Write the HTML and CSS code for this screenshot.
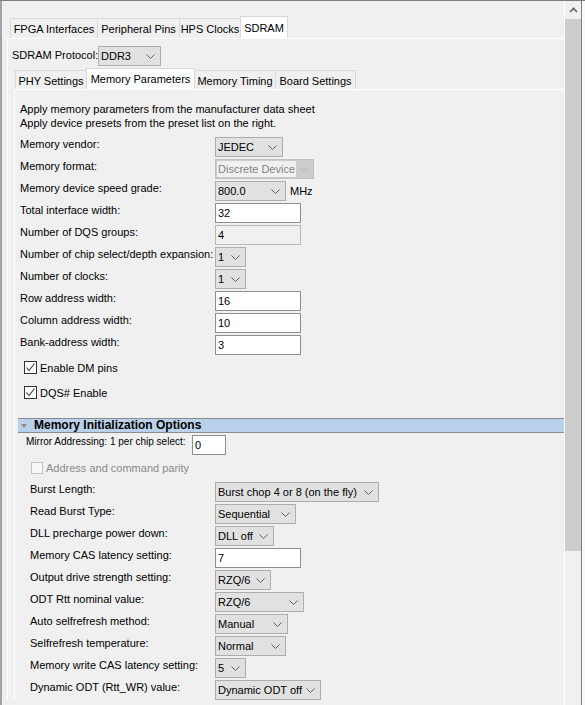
FILE: index.html
```html
<!DOCTYPE html>
<html>
<head>
<meta charset="utf-8">
<link rel="stylesheet" href="styles.css">
</head>
<body>
<div class="window">
  <div class="pane">
    <div class="tabs outer-tabs">
      <div class="tab w88">FPGA Interfaces</div>
      <div class="tab w83">Peripheral Pins</div>
      <div class="tab w62">HPS Clocks</div>
      <div class="tab active w48">SDRAM</div>
    </div>
    <div class="panel outer-panel">
      <div class="protocol-row">
        <span class="protocol-label">SDRAM Protocol:</span>
        <div class="select w63"><span class="val">DDR3</span><svg class="chev" width="9" height="5" viewBox="0 0 9 5"><polyline points="0.5,0.5 4.5,4.5 8.5,0.5"/></svg></div>
      </div>
      <div class="inner-wrap">
        <div class="tabs inner-tabs">
          <div class="tab w72">PHY Settings</div>
          <div class="tab active w109">Memory Parameters</div>
          <div class="tab w82">Memory Timing</div>
          <div class="tab w81">Board Settings</div>
        </div>
        <div class="panel inner-panel">
          <p class="intro">Apply memory parameters from the manufacturer data sheet<br>Apply device presets from the preset list on the right.</p>
          <div class="form form1">
            <span class="lbl">Memory vendor:</span>
            <div class="select w68"><span class="val">JEDEC</span><svg class="chev" width="9" height="5" viewBox="0 0 9 5"><polyline points="0.5,0.5 4.5,4.5 8.5,0.5"/></svg></div>

            <span class="lbl">Memory format:</span>
            <div class="select disabled w99"><span class="val">Discrete Device</span><svg class="chev" width="9" height="5" viewBox="0 0 9 5"><polyline points="0.5,0.5 4.5,4.5 8.5,0.5"/></svg></div>

            <span class="lbl">Memory device speed grade:</span>
            <div class="field-unit"><div class="select w71"><span class="val">800.0</span><svg class="chev" width="9" height="5" viewBox="0 0 9 5"><polyline points="0.5,0.5 4.5,4.5 8.5,0.5"/></svg></div><span class="unit">MHz</span></div>

            <span class="lbl">Total interface width:</span>
            <div class="input w86">32</div>

            <span class="lbl">Number of DQS groups:</span>
            <div class="input readonly w86">4</div>

            <span class="lbl">Number of chip select/depth expansion:</span>
            <div class="select w31"><span class="val">1</span><svg class="chev" width="9" height="5" viewBox="0 0 9 5"><polyline points="0.5,0.5 4.5,4.5 8.5,0.5"/></svg></div>

            <span class="lbl">Number of clocks:</span>
            <div class="select w31"><span class="val">1</span><svg class="chev" width="9" height="5" viewBox="0 0 9 5"><polyline points="0.5,0.5 4.5,4.5 8.5,0.5"/></svg></div>

            <span class="lbl">Row address width:</span>
            <div class="input w86">16</div>

            <span class="lbl">Column address width:</span>
            <div class="input w86">10</div>

            <span class="lbl">Bank-address width:</span>
            <div class="input w86">3</div>
          </div>

          <div class="checks">
            <label class="check"><span class="box"><svg width="11" height="11" viewBox="0 0 11 11"><polyline points="1.5,5.5 4,8.5 9.5,1.5"/></svg></span>Enable DM pins</label>
            <label class="check"><span class="box"><svg width="11" height="11" viewBox="0 0 11 11"><polyline points="1.5,5.5 4,8.5 9.5,1.5"/></svg></span>DQS# Enable</label>
          </div>

          <div class="section-header"><span class="tri"></span>Memory Initialization Options</div>

          <div class="mirror-row">
            <span class="lbl mirror-lbl">Mirror Addressing: 1 per chip select:</span>
            <div class="input w34">0</div>
          </div>

          <label class="check disabled parity"><span class="box"></span>Address and command parity</label>

          <div class="form form2">
            <span class="lbl">Burst Length:</span>
            <div class="select w164"><span class="val">Burst chop 4 or 8 (on the fly)</span><svg class="chev" width="9" height="5" viewBox="0 0 9 5"><polyline points="0.5,0.5 4.5,4.5 8.5,0.5"/></svg></div>

            <span class="lbl">Read Burst Type:</span>
            <div class="select w81"><span class="val">Sequential</span><svg class="chev" width="9" height="5" viewBox="0 0 9 5"><polyline points="0.5,0.5 4.5,4.5 8.5,0.5"/></svg></div>

            <span class="lbl">DLL precharge power down:</span>
            <div class="select w59"><span class="val">DLL off</span><svg class="chev" width="9" height="5" viewBox="0 0 9 5"><polyline points="0.5,0.5 4.5,4.5 8.5,0.5"/></svg></div>

            <span class="lbl">Memory CAS latency setting:</span>
            <div class="input w86">7</div>

            <span class="lbl">Output drive strength setting:</span>
            <div class="select w56"><span class="val">RZQ/6</span><svg class="chev" width="9" height="5" viewBox="0 0 9 5"><polyline points="0.5,0.5 4.5,4.5 8.5,0.5"/></svg></div>

            <span class="lbl">ODT Rtt nominal value:</span>
            <div class="select w89"><span class="val">RZQ/6</span><svg class="chev" width="9" height="5" viewBox="0 0 9 5"><polyline points="0.5,0.5 4.5,4.5 8.5,0.5"/></svg></div>

            <span class="lbl">Auto selfrefresh method:</span>
            <div class="select w73"><span class="val">Manual</span><svg class="chev" width="9" height="5" viewBox="0 0 9 5"><polyline points="0.5,0.5 4.5,4.5 8.5,0.5"/></svg></div>

            <span class="lbl">Selfrefresh temperature:</span>
            <div class="select w71"><span class="val">Normal</span><svg class="chev" width="9" height="5" viewBox="0 0 9 5"><polyline points="0.5,0.5 4.5,4.5 8.5,0.5"/></svg></div>

            <span class="lbl">Memory write CAS latency setting:</span>
            <div class="select w31"><span class="val">5</span><svg class="chev" width="9" height="5" viewBox="0 0 9 5"><polyline points="0.5,0.5 4.5,4.5 8.5,0.5"/></svg></div>

            <span class="lbl">Dynamic ODT (Rtt_WR) value:</span>
            <div class="select w106"><span class="val">Dynamic ODT off</span><svg class="chev" width="9" height="5" viewBox="0 0 9 5"><polyline points="0.5,0.5 4.5,4.5 8.5,0.5"/></svg></div>
          </div>
        </div>
      </div>
    </div>
  </div>
  <div class="scrollbar">
    <div class="sb-arrow"><svg width="9" height="6" viewBox="0 0 9 6"><polyline points="1,5 4.5,1.5 8,5"/></svg></div>
    <div class="sb-thumb"></div>
  </div>
  <div class="edge"></div>
</div>
</body>
</html>
```
FILE: styles.css
```css
* { box-sizing: border-box; }
html, body { margin: 0; padding: 0; }
body {
  width: 585px;
  height: 705px;
  overflow: hidden;
  background: #f0f0f0;
  font-family: "Liberation Sans", Arial, sans-serif;
  font-size: 11px;
  line-height: 14px;
  color: #000;
}
.window {
  display: flex;
  height: 705px;
  border-top: 1px solid #7d7d7d;
}
.pane {
  width: 564px;
  height: 704px;
  overflow: hidden;
  border-left: 2px solid #a3a3a3;
}

/* tabs */
.tabs { display: flex; align-items: flex-start; }
.outer-tabs { height: 22px; margin-top: 15px; padding-left: 8px; }
.inner-tabs { height: 21px; padding-left: 1px; }
.tab {
  height: 20px;
  margin-top: 2px;
  margin-right: -1px;
  border: 1px solid #d9d9d9;
  border-bottom: none;
  background: #f0f0f0;
  display: flex;
  align-items: center;
  justify-content: center;
  white-space: nowrap;
  padding-top: 1px;
}
.inner-tabs .tab { height: 19px; }
.tab.active {
  height: 22px;
  margin-top: 0;
  background: #fff;
  position: relative;
  z-index: 1;
  padding-top: 0;
}
.inner-tabs .tab.active { height: 21px; }
.w88 { width: 88px; }
.w83 { width: 83px; }
.w62 { width: 62px; }
.w48 { width: 48px; }
.w72 { width: 72px; }
.w109 { width: 109px; }
.w82 { width: 82px; }
.w81 { width: 81px; }

/* panels */
.panel { border-top: 1px solid #fff; border-left: 1px solid #fff; }
.outer-panel { margin-left: 5px; padding: 7px 0 0 4px; }
.protocol-row { display: flex; align-items: center; height: 20px; }
.protocol-label { width: 86px; white-space: nowrap; padding-bottom: 2px; }
.inner-wrap { margin-top: 2px; margin-left: 2px; }
.inner-panel { padding: 12px 0 0 3px; }

.intro { margin: 0 0 7px 0; padding-left: 2px; }

/* form grid */
.form {
  display: grid;
  grid-auto-rows: 20px;
  row-gap: 2px;
  align-items: start;
}
.form1 { grid-template-columns: 195px 1fr; padding-left: 2px; }
.form2 { grid-template-columns: 185px 1fr; padding-left: 12px; margin-top: 8px; }
.lbl { white-space: nowrap; padding-top: 0; }

/* controls */
.select {
  height: 20px;
  display: flex;
  align-items: center;
  justify-content: space-between;
  background: #e1e1e1;
  border: 1px solid #adadad;
  padding: 0 5px 0 2px;
  white-space: nowrap;
}
.select .val { line-height: 16px; }
.chev { flex: none; }
.chev polyline { fill: none; stroke: #606060; stroke-width: 1; }
.select.disabled { background: #cccccc; border-color: #bfbfbf; color: #838383; padding-left: 1px; }
.select.disabled .val { background: #f0f0f0; padding: 0 1px; }
.select.disabled .chev polyline { stroke: #b3b3b3; }

.field-unit { display: flex; align-items: center; gap: 4px; }
.unit { line-height: 20px; }

.input {
  height: 20px;
  background: #fff;
  border: 1px solid #8f8f8f;
  padding-left: 2px;
  line-height: 18px;
}
.input.readonly { background: #f0f0f0; border-color: #b9b9b9; }

.w31 { width: 31px; }
.w34 { width: 34px; }
.w56 { width: 56px; }
.w59 { width: 59px; }
.w63 { width: 63px; }
.w68 { width: 68px; }
.w71 { width: 71px; }
.w73 { width: 73px; }
.w86 { width: 86px; }
.w89 { width: 89px; }
.w99 { width: 99px; }
.w106 { width: 106px; }
.w164 { width: 164px; }

/* checkboxes */
.checks {
  display: flex;
  flex-direction: column;
  gap: 12px;
  margin-top: 6px;
  padding-left: 6px;
}
.check {
  display: flex;
  align-items: center;
  gap: 3px;
  height: 13px;
  white-space: nowrap;
}
.check .box {
  width: 13px;
  height: 13px;
  border: 1px solid #333;
  background: #fff;
  display: flex;
  align-items: center;
  justify-content: center;
  flex: none;
}
.check .box polyline { fill: none; stroke: #333; stroke-width: 1.1; }
.check.disabled { color: #8a8a8a; }
.check.disabled .box { border-color: #c2c2c2; background: #f7f7f7; width: 12px; height: 12px; }
.parity { margin-top: 6px; padding-left: 13px; }

/* section header */
.section-header {
  margin-top: 19px;
  height: 15px;
  background: #b9d1ea;
  border-top: 1px solid #8c8c8c;
  border-bottom: 1px solid #8c8c8c;
  font-weight: bold;
  font-size: 12px;
  line-height: 13px;
  display: flex;
  align-items: center;
  white-space: nowrap;
}
.tri {
  width: 0;
  height: 0;
  border-left: 3px solid transparent;
  border-right: 3px solid transparent;
  border-top: 4px solid #8c8c8c;
  margin: 0 7px 0 3px;
}

.mirror-row { display: flex; align-items: flex-start; margin-top: 2px; padding-left: 8px; height: 20px; }
.mirror-lbl { width: 166px; font-size: 10px; line-height: 14px; }

/* scrollbar */
.scrollbar {
  width: 17px;
  border-left: 1px solid #fff;
  display: flex;
  flex-direction: column;
}
.sb-arrow { height: 18px; display: flex; align-items: center; justify-content: center; }
.sb-arrow polyline { fill: none; stroke: #606060; stroke-width: 1.6; }
.sb-thumb { height: 532px; background: #cdcdcd; }
.edge { width: 4px; border-left: 1px solid #808080; background: #fafafa; }
```
